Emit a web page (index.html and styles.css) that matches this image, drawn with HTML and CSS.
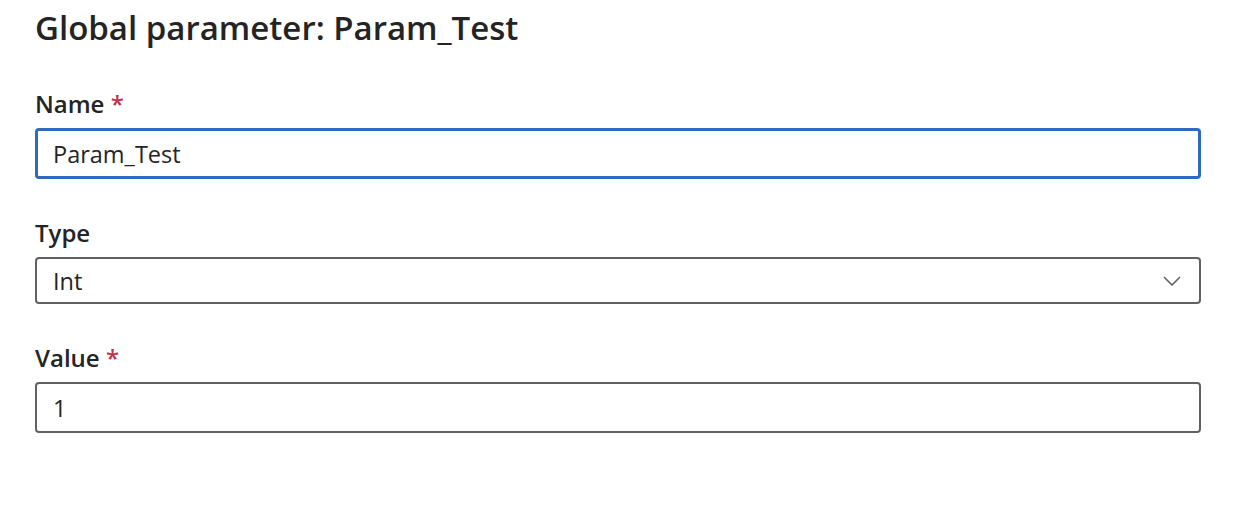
FILE: index.html
```html
<!DOCTYPE html>
<html lang="en">
<head>
  <meta charset="UTF-8">
  <title>Global parameter</title>
  <link rel="stylesheet" href="styles.css">
</head>
<body>
  <div class="panneau">
    <h1>Global parameter: Param_Test</h1>

    <div class="champ">
      <label for="nom">Name <span class="requis">*</span></label>
      <input type="text" id="nom" class="saisie actif" value="Param_Test">
    </div>

    <div class="champ">
      <label for="type">Type</label>
      <div class="liste">
        <span>Int</span>
        <svg width="18" height="10" viewBox="0 0 18 10"><path d="M1 1 L9 9 L17 1" fill="none" stroke="#616161" stroke-width="1.6"/></svg>
      </div>
    </div>

    <div class="champ">
      <label for="valeur">Value <span class="requis">*</span></label>
      <input type="text" id="valeur" class="saisie" value="1">
    </div>
  </div>
</body>
</html>
```

FILE: styles.css
```css
body {
  margin: 0;
  background-color: white;
  font-family: "Open Sans", "Noto Sans", sans-serif;
  color: #242424;
}

.panneau {
  width: 1166px;
  padding: 2px 0 0 35px;
}

h1 {
  font-size: 33px;
  font-weight: 600;
  line-height: 52px;
  margin: 0 0 35px 0;
}

.champ {
  margin-bottom: 39px;
}

label {
  display: block;
  font-size: 24px;
  font-weight: 600;
  line-height: 30px;
  margin-bottom: 9px;
}

.requis {
  color: #c4314b;
}

.saisie, .liste {
  box-sizing: border-box;
  width: 100%;
  height: 51px;
  border: 2px solid #616161;
  border-radius: 4px;
  padding: 0 16px;
  font-family: inherit;
  font-size: 23.5px;
  color: #242424;
  outline: none;
}

.actif {
  border: 3px solid #2f6bbd;
  padding: 0 15px;
}

.liste {
  height: 47px;
  display: flex;
  align-items: center;
  justify-content: space-between;
  padding-right: 18px;
}
```
